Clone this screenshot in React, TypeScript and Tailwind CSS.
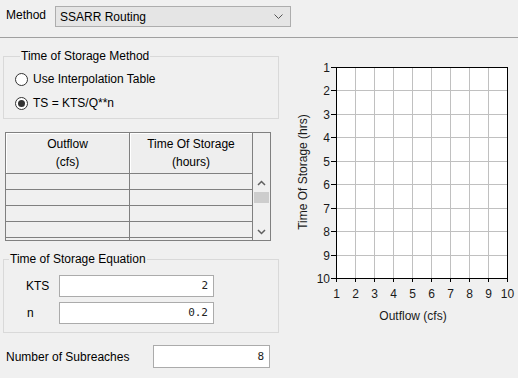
import React from 'react';

const font = { fontFamily: '"Liberation Sans", Arial, sans-serif' };

function Radio({ checked, label }: { checked?: boolean; label: string }) {
  return (
    <div className="flex items-center h-[24px]">
      <div className="w-[13px] h-[13px] rounded-full border border-[#333333] bg-white flex items-center justify-center">
        {checked && <div className="w-[7px] h-[7px] rounded-full bg-[#333333]" />}
      </div>
      <span className="ml-[5px]">{label}</span>
    </div>
  );
}

function Field({ value, className }: { value: string; className: string }) {
  return (
    <div
      className={`bg-white border border-[#ababab] flex items-center justify-end pr-[5px] text-[11px] text-[#222222] ${className}`}
      style={{ fontFamily: '"DejaVu Sans Mono", "Liberation Mono", monospace' }}
    >
      {value}
    </div>
  );
}

function Chart() {
  const x0 = 336, x1 = 507, y0 = 68, y1 = 279;
  const dx = (x1 - x0) / 9;
  const dy = (y1 - y0) / 9;
  const ticks = Array.from({ length: 10 }, (_, i) => i);
  return (
    <svg width={228} height={290} viewBox="290 50 228 290" className="ml-[10px] shrink-0" style={font}>
      <rect x={x0} y={y0} width={x1 - x0} height={y1 - y0} fill="#ffffff" />
      {ticks.slice(1, 9).map((i) => (
        <g key={i} shapeRendering="crispEdges">
          <line x1={Math.round(x0 + dx * i) + 0.5} y1={y0} x2={Math.round(x0 + dx * i) + 0.5} y2={y1} stroke="#c0c0c0" />
          <line x1={x0} y1={Math.round(y0 + dy * i) + 0.5} x2={x1} y2={Math.round(y0 + dy * i) + 0.5} stroke="#c0c0c0" />
        </g>
      ))}
      <rect x={x0 + 0.5} y={y0 + 0.5} width={x1 - x0} height={y1 - y0} fill="none" stroke="#000000" shapeRendering="crispEdges" />
      {ticks.map((i) => {
        const y = Math.round(y0 + dy * i) + 0.5;
        const x = Math.round(x0 + dx * i) + 0.5;
        return (
          <g key={i}>
            <line x1={331} y1={y} x2={x0} y2={y} stroke="#000000" shapeRendering="crispEdges" />
            <text x={330} y={y} textAnchor="end" dominantBaseline="central" fontSize={12} fill="#1a1a1a">
              {i + 1}
            </text>
            <line x1={x} y1={y1} x2={x} y2={y1 + 4} stroke="#000000" shapeRendering="crispEdges" />
            <text x={x} y={295} textAnchor="middle" dominantBaseline="central" fontSize={12} fill="#1a1a1a">
              {i + 1}
            </text>
          </g>
        );
      })}
      <text x={413} y={317} textAnchor="middle" dominantBaseline="central" fontSize={12} fill="#1a1a1a">
        Outflow (cfs)
      </text>
      <text
        x={302.5}
        y={173}
        textAnchor="middle"
        dominantBaseline="central"
        fontSize={12}
        fill="#1a1a1a"
        transform="rotate(-90 302.5 173)"
      >
        Time Of Storage (hrs)
      </text>
    </svg>
  );
}

export default function App() {
  const rows = [0, 1, 2, 3, 4];
  return (
    <div className="w-[518px] h-[378px] bg-[#f0f0f0] text-[12px] text-black overflow-hidden leading-[14px]" style={font}>
      {/* Method selector */}
      <div className="flex items-center pt-[6px] pl-[6px]">
        <span className="w-[49px] -mt-[3px]">Method</span>
        <div className="w-[236px] h-[21px] bg-[#e5e5e5] border border-[#adadad] flex items-center justify-between pl-[4px] pr-[7px]">
          <span>SSARR Routing</span>
          <svg width="9" height="6" viewBox="0 0 9 6">
            <polyline points="0.5,0.5 4.5,4.5 8.5,0.5" fill="none" stroke="#555555" strokeWidth="1" />
          </svg>
        </div>
      </div>
      <div className="mt-[10px] border-t border-[#a0a0a0]" />

      <div className="flex items-start mt-[11px]">
        {/* left column */}
        <div className="w-[280px] pl-[3px] shrink-0">
          <fieldset className="w-[276px] border border-[#d9d9d9] pl-[11px] pb-[3px]">
            <legend className="ml-[5px] px-[1px] leading-[14px]">Time of Storage Method</legend>
            <div className="pt-[4px]">
              <Radio label="Use Interpolation Table" />
              <Radio checked label="TS = KTS/Q**n" />
            </div>
          </fieldset>

          <div className="ml-[2px] mt-[13px] w-[266px] h-[109px] border border-[#808080] flex overflow-hidden">
            <div className="w-[247px] flex flex-col">
              <div className="flex h-[41px] border-b border-[#808080] shrink-0">
                <div className="w-[124px] border-r border-[#808080] bg-[#eeeeee] shadow-[inset_1px_1px_0_#ffffff] flex flex-col items-center justify-center leading-[18px]">
                  <span>Outflow</span>
                  <span>(cfs)</span>
                </div>
                <div className="w-[123px] border-r border-[#808080] bg-[#eeeeee] shadow-[inset_1px_1px_0_#ffffff] flex flex-col items-center justify-center leading-[18px]">
                  <span>Time Of Storage</span>
                  <span>(hours)</span>
                </div>
              </div>
              {rows.map((r) => (
                <div key={r} className="flex h-[16px] border-b border-[#808080] shrink-0">
                  <div className="w-[124px] border-r border-[#808080]" />
                  <div className="w-[123px] border-r border-[#808080]" />
                </div>
              ))}
            </div>
            <div className="w-[17px] flex flex-col">
              <div className="h-[41px] shrink-0" />
              <div className="flex-1 flex flex-col items-center pt-[6px]">
                <svg width="9" height="6" viewBox="0 0 9 6">
                  <polyline points="1,5 4.5,1.5 8,5" fill="none" stroke="#606060" strokeWidth="1.5" />
                </svg>
                <div className="mt-[6px] w-[15px] h-[11px] bg-[#cdcdcd]" />
                <div className="flex-1" />
                <svg width="9" height="6" viewBox="0 0 9 6" className="mb-[5px]">
                  <polyline points="1,1 4.5,4.5 8,1" fill="none" stroke="#606060" strokeWidth="1.5" />
                </svg>
              </div>
            </div>
          </div>

          <fieldset className="mt-[11px] w-[276px] border border-[#d9d9d9] pb-[8px]">
            <legend className="ml-[5px] px-[1px] leading-[14px]">Time of Storage Equation</legend>
            <div className="pt-[9px] flex flex-col gap-[5px]">
              <div className="flex items-center">
                <span className="w-[55px] pl-[22px]">KTS</span>
                <Field value="2" className="w-[155px] h-[22px]" />
              </div>
              <div className="flex items-center">
                <span className="w-[55px] pl-[23px]">n</span>
                <Field value="0.2" className="w-[155px] h-[22px]" />
              </div>
            </div>
          </fieldset>

          <div className="mt-[12px] flex items-center -ml-[3px] pl-[6px]">
            <span className="w-[147px]">Number of Subreaches</span>
            <Field value="8" className="w-[117px] h-[23px]" />
          </div>
        </div>

        <Chart />
      </div>
    </div>
  );
}
